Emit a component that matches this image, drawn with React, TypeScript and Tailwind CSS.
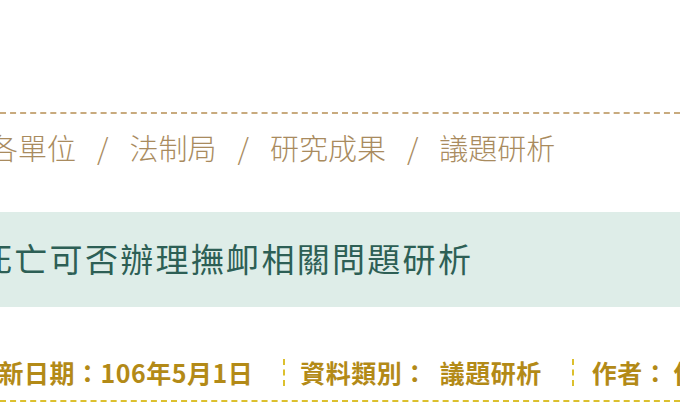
import React from "react";

const cjk = { fontFamily: '"Noto Sans CJK TC", "Noto Sans", sans-serif' };

function Sep() {
  return <span className="mx-[21px] text-[#a98b5e]">/</span>;
}

export default function App() {
  return (
    <div className="w-[680px] h-[410px] overflow-hidden bg-white" style={cjk}>
      <div className="pt-[112px]">
        <div className="border-t-2 border-dashed border-[#c8aa7e] pt-[13px]">
          <div className="ml-[-11px] whitespace-nowrap text-[29px] leading-[40px] text-[#a98b5e] font-light">
            <span>各單位</span>
            <Sep />
            <span>法制局</span>
            <Sep />
            <span>研究成果</span>
            <Sep />
            <span>議題研析</span>
          </div>
        </div>
        <div className="mt-[45px] h-[95px] bg-[#deede8] flex items-center">
          <div className="ml-[-21px] mt-[-1px] whitespace-nowrap text-[33px] tracking-[2.3px] text-[#2d5f55]">
            死亡可否辦理撫卹相關問題研析
          </div>
        </div>
        <div className="mt-[47px] border-b-2 border-dashed border-[#dcc02e] pb-[10px] flex items-center whitespace-nowrap text-[25px] leading-[36px] font-bold tracking-[0.5px] text-[#b38a17]">
          <span className="shrink-0 ml-[-27px]">更新日期：106年5月1日</span>
          <span className="shrink-0 inline-block h-[27px] border-l-2 border-dashed border-[#dcc02e] ml-[30px] mr-[15px]" />
          <span className="shrink-0">
            資料類別：<span className="ml-[12px]">議題研析</span>
          </span>
          <span className="shrink-0 inline-block h-[27px] border-l-2 border-dashed border-[#dcc02e] ml-[30px] mr-[18px]" />
          <span className="shrink-0">
            作者：<span className="ml-[5px]">何</span>
          </span>
        </div>
      </div>
    </div>
  );
}
